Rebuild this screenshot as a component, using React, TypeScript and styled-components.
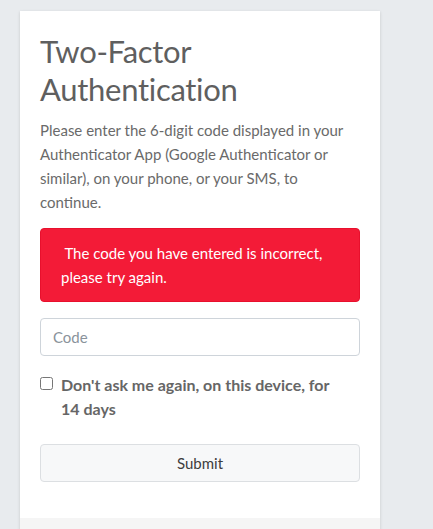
import React from "react";
import styled, { createGlobalStyle } from "styled-components";

const Global = createGlobalStyle`
  html, body { margin: 0; padding: 0; background: #e8ebee; }
  body { font-family: "Source Sans Pro", Lato, "Noto Sans", sans-serif; }
  * { box-sizing: border-box; }
`;

const Page = styled.div`
  padding: 11px 0 0 20px;
  height: 529px;
  overflow: hidden;
`;

const Card = styled.div`
  width: 360px;
  background: #fff;
  box-shadow: 0 1px 3px rgba(0, 0, 0, 0.15);
  display: flex;
  flex-direction: column;
`;

const Body = styled.div`
  padding: 21px 20px 36px;
  display: flex;
  flex-direction: column;
`;

const Footer = styled.div`
  height: 40px;
  background: #f5f5f5;
`;

const Title = styled.h1`
  margin: 0 0 10px;
  font-weight: 400;
  font-size: 31px;
  letter-spacing: -0.3px;
  line-height: 38px;
  color: #5f5f5f;
`;

const Text = styled.div`
  font-size: 15px;
  line-height: 24px;
`;

const Lead = styled(Text)`
  margin: 0 0 14px;
  color: #6a6a6a;
`;

const Alert = styled(Text)`
  background: #f31b37;
  border: 1px solid #e8102d;
  border-radius: 4px;
  padding: 12px 20px;
  color: #fff;
  margin-bottom: 16px;
`;

const Input = styled.input`
  width: 100%;
  height: 38px;
  border: 1px solid #ced4da;
  border-radius: 4px;
  padding: 6px 12px;
  font-family: inherit;
  font-size: 15px;
  color: #495057;
  margin: 0 0 17px;
  &::placeholder { color: #8a939b; }
`;

const CheckRow = styled.label`
  display: flex;
  align-items: flex-start;
  gap: 8px;
  padding-right: 20px;
  font-weight: 700;
  font-size: 16px;
  line-height: 24px;
  color: #666;
  margin-bottom: 23px;
`;

const Box = styled.input`
  margin: 4px 0 0 0;
  width: 13px;
  height: 13px;
  flex-shrink: 0;
`;

const Button = styled.button`
  width: 100%;
  height: 38px;
  background: #f7f8f9;
  border: 1px solid #dcdfe2;
  border-radius: 4px;
  font-family: inherit;
  font-size: 15px;
  color: #3d3d3d;
`;

export default function App() {
  return (
    <>
      <Global />
      <Page>
        <Card>
          <Body>
            <Title>Two-Factor Authentication</Title>
            <Lead>
              Please enter the 6-digit code displayed in your Authenticator App
              (Google Authenticator or similar), on your phone, or your SMS, to
              continue.
            </Lead>
            <Alert>
              &nbsp;The code you have entered is incorrect, please try again.
            </Alert>
            <Input placeholder="Code" />
            <CheckRow>
              <Box type="checkbox" />
              <span>Don't ask me again, on this device, for 14 days</span>
            </CheckRow>
            <Button>Submit</Button>
          </Body>
          <Footer />
        </Card>
      </Page>
    </>
  );
}
